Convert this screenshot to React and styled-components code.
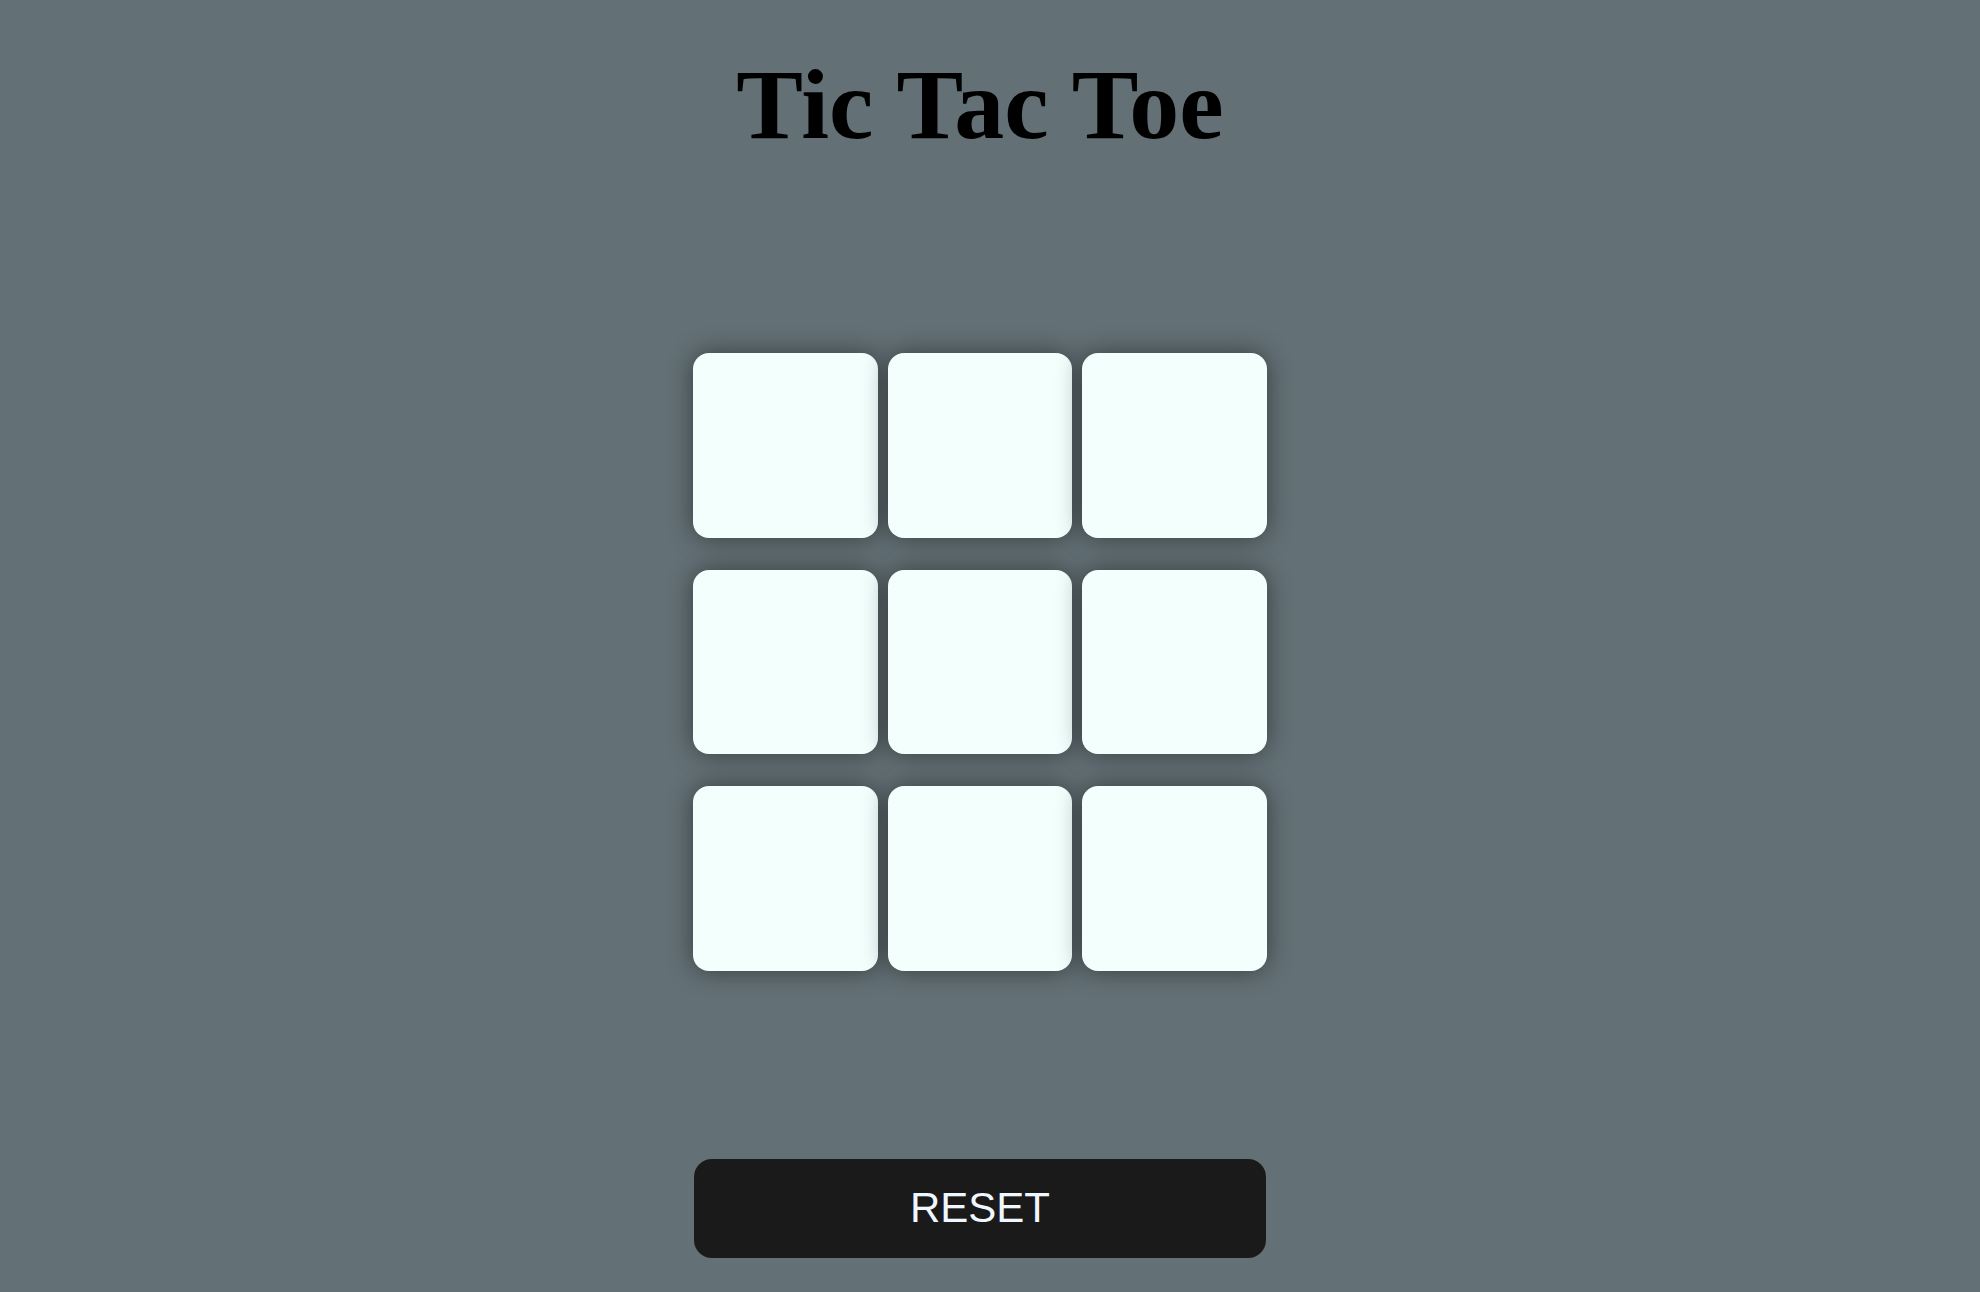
import React, { useState } from "react";
import styled, { createGlobalStyle } from "styled-components";

const GlobalStyle = createGlobalStyle`
  html, body {
    margin: 0;
    padding: 0;
    background: #637075;
  }
  body {
    font-family: "Liberation Serif", "Times New Roman", serif;
  }
`;

const Page = styled.main`
  display: flex;
  flex-direction: column;
  align-items: center;
  padding: 50px 20px 0 0;
  min-height: 1292px;
  box-sizing: border-box;
`;

const Title = styled.h1`
  margin: 0;
  font-family: "Liberation Serif", "Times New Roman", serif;
  font-weight: 700;
  font-size: 100px;
  line-height: 110px;
  color: #000;
`;

const Board = styled.div`
  display: grid;
  grid-template-columns: repeat(3, 1fr);
  grid-auto-rows: 184.5px;
  column-gap: 10px;
  row-gap: 32px;
  width: 574px;
  margin-top: 193px;
`;

const Cell = styled.button`
  border: none;
  padding: 0;
  border-radius: 16px;
  background: #f3fffd;
  box-shadow: 0 0 26px rgba(0, 0, 0, 0.45);
  cursor: pointer;
  font-family: "Liberation Sans", Arial, sans-serif;
  font-size: 96px;
  color: #1a1a1a;
`;

const ResetButton = styled.button`
  margin-top: 188px;
  width: 572px;
  height: 99px;
  border: none;
  border-radius: 18px;
  background: #1a1a1a;
  color: #f0f8ff;
  font-family: "Liberation Sans", Arial, sans-serif;
  font-size: 42px;
  cursor: pointer;
`;

export default function App() {
  const [cells, setCells] = useState(Array(9).fill(""));
  const [turn, setTurn] = useState("X");

  const play = (i) => {
    if (cells[i]) return;
    const next = cells.slice();
    next[i] = turn;
    setCells(next);
    setTurn(turn === "X" ? "O" : "X");
  };

  return (
    <>
      <GlobalStyle />
      <Page>
        <Title>Tic Tac Toe</Title>
        <Board>
          {cells.map((c, i) => (
            <Cell key={i} onClick={() => play(i)}>
              {c}
            </Cell>
          ))}
        </Board>
        <ResetButton
          onClick={() => {
            setCells(Array(9).fill(""));
            setTurn("X");
          }}
        >
          RESET
        </ResetButton>
      </Page>
    </>
  );
}
